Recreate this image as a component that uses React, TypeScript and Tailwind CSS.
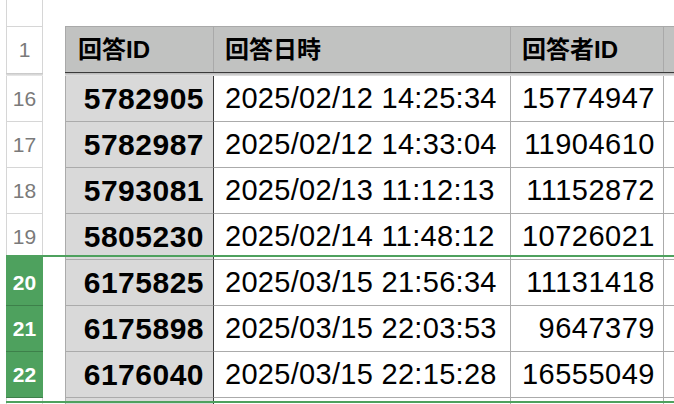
import React from 'react';

interface Row {
  n: number;
  id: string;
  at: string;
  uid: string;
}

const rows: Row[] = [
  { n: 16, id: '5782905', at: '2025/02/12 14:25:34', uid: '15774947' },
  { n: 17, id: '5782987', at: '2025/02/12 14:33:04', uid: '11904610' },
  { n: 18, id: '5793081', at: '2025/02/13 11:12:13', uid: '11152872' },
  { n: 19, id: '5805230', at: '2025/02/14 11:48:12', uid: '10726021' },
  { n: 20, id: '6175825', at: '2025/03/15 21:56:34', uid: '11131418' },
  { n: 21, id: '6175898', at: '2025/03/15 22:03:53', uid: '9647379' },
  { n: 22, id: '6176040', at: '2025/03/15 22:15:28', uid: '16555049' },
  { n: 23, id: '', at: '', uid: '' },
];

const font = { fontFamily: '"Liberation Sans", "Noto Sans CJK JP", sans-serif' };

export default function App() {
  return (
    <div className="relative w-[674px] h-[404px] overflow-hidden bg-white text-black" style={font}>
      {/* top gutter row */}
      <div className="flex h-[26px]">
        <div className="w-[6px]" />
        <div className="w-[37px] border-x border-[#d6d6d6]" />
      </div>

      {/* header row */}
      <div className="flex h-[47px]">
        <div className="w-[6px]" />
        <div className="w-[37px] border-x border-t border-[#d6d6d6] flex items-center justify-center text-[21px] text-[#7a7a7a]">
          1
        </div>
        <div className="w-[22px]" />
        <div className="flex flex-1 bg-[#c1c2c1] border-t border-b border-t-[#a9a9a9] border-b-[#3a3a3a] text-[24px] font-bold">
          <div className="w-[149px] border-x border-[#a9a9a9] flex items-center pl-[12px]">回答ID</div>
          <div className="w-[297px] border-r border-[#a9a9a9] flex items-center pl-[11px]">回答日時</div>
          <div className="w-[153px] border-r border-[#a9a9a9] flex items-center pl-[11px]">回答者ID</div>
          <div className="flex-1" />
        </div>
      </div>

      {/* freeze band */}
      <div className="flex h-[3px]">
        <div className="w-[6px]" />
        <div className="w-[37px] bg-linear-to-b from-[#c4c4c4] to-[#ececec]" />
        <div className="w-[22px]" />
        <div className="flex-1 bg-linear-to-b from-[#b4b4b4] to-[#e4e4e4]" />
      </div>

      {rows.map((r) => {
        const sel = r.n >= 20 && r.n <= 22;
        const label = r.n <= 22 ? r.n : '';
        return (
          <div key={r.n} className="flex h-[46px]">
            <div className="w-[6px]" />
            {sel ? (
              <div className="w-[37px] bg-[#4ea15e] border-b border-[#3d804a] flex items-center justify-center text-[21px] font-semibold text-white">
                {label}
              </div>
            ) : (
              <div className="w-[37px] border-x border-b border-[#d6d6d6] flex items-center justify-center text-[21px] text-[#7a7a7a]">
                {label}
              </div>
            )}
            <div className="w-[22px]" />
            <div className="w-[149px] bg-[#d9d9d9] border-l border-b border-r border-l-[#ababab] border-b-[#ababab] border-r-[#3a3a3a] flex items-center justify-end pr-[9px] text-[30px] font-bold tracking-[0.5px]">
              {r.id}
            </div>
            <div className="w-[297px] border-r border-b border-[#ababab] flex items-center pl-[11px] text-[29px] tracking-[0.3px]">
              {r.at}
            </div>
            <div className="w-[153px] border-r border-b border-[#ababab] flex items-center justify-end pr-[8px] text-[29px] tracking-[0.5px]">
              {r.uid}
            </div>
            <div className="flex-1 border-b border-[#ababab]" />
          </div>
        );
      })}

      {/* selection outline for rows 20-22 */}
      <div className="absolute left-[6px] top-[255px] w-[37px] h-[6px] bg-[#4ea15e]" />
      <div className="absolute left-[6px] right-0 top-[255px] h-[148px] border-y-2 border-[#4ea15e] pointer-events-none" />
    </div>
  );
}
